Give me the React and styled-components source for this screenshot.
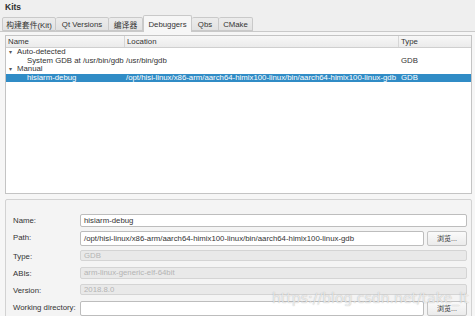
import React from 'react'
import styled, { createGlobalStyle } from 'styled-components'

const GlobalStyle = createGlobalStyle`
    html, body{
        margin: 0;
        padding: 0;
        background: #efefef;
    }
    body{
        font-family: 'Liberation Sans', 'Noto Sans CJK SC', sans-serif;
        font-size: 7.8px;
        color: #3c3c3c;
    }
`

const tabs = ['构建套件(Kit)', 'Qt Versions', '编译器', 'Debuggers', 'Qbs', 'CMake']
const tabWidths = [54, 53, 34, 49, 27, 34]

const rows = [
    { level: 0, name: 'Auto-detected', arrow: true },
    { level: 1, name: 'System GDB at /usr/bin/gdb', location: '/usr/bin/gdb', type: 'GDB' },
    { level: 0, name: 'Manual', arrow: true },
    { level: 1, name: 'hisiarm-debug', location: '/opt/hisi-linux/x86-arm/aarch64-himix100-linux/bin/aarch64-himix100-linux-gdb', type: 'GDB', selected: true },
]

const fields = [
    { label: 'Name:', value: 'hisiarm-debug', h: 13 },
    { label: 'Path:', value: '/opt/hisi-linux/x86-arm/aarch64-himix100-linux/bin/aarch64-himix100-linux-gdb', browse: true, h: 15 },
    { label: 'Type:', value: 'GDB', disabled: true, h: 11 },
    { label: 'ABIs:', value: 'arm-linux-generic-elf-64bit', disabled: true, h: 12 },
    { label: 'Version:', value: '2018.8.0', disabled: true, h: 11 },
    { label: 'Working directory:', value: '', browse: true, h: 15 },
]

const App = () => {
  return (
    <Window>
        <GlobalStyle />
        <Title>Kits</Title>

        <TabBar>
            {tabs.map((t, i) => (
                <Tab key={t} $active={t === 'Debuggers'} style={{ width: tabWidths[i] }}>{t}</Tab>
            ))}
        </TabBar>

        <Pane>
            <Tree>
                <HeaderRow>
                    <HeaderCell $w={119}>Name</HeaderCell>
                    <HeaderCell $w={274}>Location</HeaderCell>
                    <HeaderCell>Type</HeaderCell>
                </HeaderRow>
                <Rows>
                    {rows.map((r) => (
                        <Row key={r.name} $selected={r.selected}>
                            <Cell $w={119} $indent={r.level ? 21 : 3}>
                                {r.arrow && <Arrow>▾</Arrow>}
                                {r.name}
                            </Cell>
                            <Cell $w={274} $indent={1}>{r.location}</Cell>
                            <Cell>{r.type}</Cell>
                        </Row>
                    ))}
                </Rows>
            </Tree>

            <Details>
                <FieldGrid>
                    {fields.map((f) => (
                        <React.Fragment key={f.label}>
                            <Label>{f.label}</Label>
                            <FieldRow>
                                <Input $disabled={f.disabled} $h={f.h}>{f.value}</Input>
                                {f.browse && <Button>浏览...</Button>}
                            </FieldRow>
                        </React.Fragment>
                    ))}
                </FieldGrid>
            </Details>
        </Pane>

        <Watermark>https://blog.csdn.net/take_lt</Watermark>
    </Window>
  )
}

export default App

const Window = styled.div`
    position: relative;
    width: 475px;
    height: 316px;
    overflow: hidden;
    background: #efefef;
`

const Title = styled.div`
    height: 15px;
    padding-left: 5px;
    font-weight: bold;
    font-size: 8.5px;
    line-height: 14px;
    color: #2e2e2e;
`

const TabBar = styled.div`
    display: flex;
    align-items: flex-end;
    height: 16px;
    padding-left: 2px;
    position: relative;
    z-index: 1;
`

const Tab = styled.div`
    box-sizing: border-box;
    height: ${p => p.$active ? '17px' : '14px'};
    margin-bottom: ${p => p.$active ? '-1px' : '0'};
    display: flex;
    align-items: center;
    justify-content: center;
    border: 1px solid #c9c9c9;
    border-bottom: ${p => p.$active ? 'none' : '1px solid #c9c9c9'};
    border-left-width: ${p => p.$active ? '1px' : '0'};
    border-radius: 2px 2px 0 0;
    background: ${p => p.$active ? '#f6f6f6' : 'linear-gradient(#ececec, #e2e2e2)'};
    color: #333;
    white-space: nowrap;
    &:first-child{
        border-left-width: 1px;
    }
`

const Pane = styled.div`
    border-top: 1px solid #c9c9c9;
    background: #f6f6f6;
    padding: 3px 3px 0 5px;
    height: 300px;
    box-sizing: border-box;
`

const Tree = styled.div`
    height: 159px;
    border: 1px solid #c4c4c4;
    background: #ffffff;
    box-sizing: border-box;
`

const HeaderRow = styled.div`
    display: flex;
    height: 11px;
    background: linear-gradient(#f7f7f7, #ebebeb);
    border-bottom: 1px solid #cfcfcf;
`

const HeaderCell = styled.div`
    ${p => p.$w ? `width: ${p.$w}px;` : 'flex: 1;'}
    box-sizing: border-box;
    padding-left: 2px;
    line-height: 11px;
    border-right: 1px solid #d6d6d6;
    color: #333;
    &:last-child{
        border-right: none;
    }
`

const Rows = styled.div`
    padding-top: 0px;
`

const Row = styled.div`
    display: flex;
    height: 8.5px;
    line-height: 8.5px;
    background: ${p => p.$selected ? '#308cc6' : 'transparent'};
    color: ${p => p.$selected ? '#ffffff' : '#333'};
    white-space: nowrap;
`

const Cell = styled.div`
    ${p => p.$w ? `width: ${p.$w}px;` : 'flex: 1;'}
    box-sizing: border-box;
    padding-left: ${p => p.$indent ?? 2}px;
`

const Arrow = styled.span`
    display: inline-block;
    width: 8px;
    font-size: 6px;
    color: #555;
`

const Details = styled.div`
    margin-top: 5px;
    height: 130px;
    border: 1px solid #d2d2d2;
    border-radius: 2px;
    background: #f4f4f4;
    box-sizing: border-box;
    padding: 14px 4px 0 7px;
`

const FieldGrid = styled.div`
    display: grid;
    grid-template-columns: 67px 1fr;
    grid-auto-rows: auto;
    row-gap: 4px;
    align-items: start;
`

const Label = styled.div`
    line-height: 13px;
    color: #333;
`

const FieldRow = styled.div`
    display: flex;
    gap: 3px;
`

const Input = styled.div`
    flex: 1;
    box-sizing: border-box;
    height: ${p => p.$h}px;
    line-height: ${p => p.$h - 2}px;
    padding-left: 3px;
    border: 1px solid ${p => p.$disabled ? '#d4d4d4' : '#bdbdbd'};
    border-radius: 2px;
    background: ${p => p.$disabled ? '#e9e9e9' : '#ffffff'};
    color: ${p => p.$disabled ? '#b4b4b4' : '#333'};
    white-space: nowrap;
    overflow: hidden;
`

const Button = styled.div`
    width: 40px;
    box-sizing: border-box;
    height: 15px;
    line-height: 13px;
    text-align: center;
    border: 1px solid #c4c4c4;
    border-radius: 2px;
    background: linear-gradient(#fafafa, #ebebeb);
    color: #333;
    font-size: 7px;
`

const Watermark = styled.div`
    position: absolute;
    left: 272px;
    top: 290px;
    font-family: 'DejaVu Sans', sans-serif;
    font-size: 14px;
    color: rgba(255, 255, 255, 0.7);
    text-shadow: 0 0 1px rgba(120, 120, 120, 0.6);
    pointer-events: none;
`
